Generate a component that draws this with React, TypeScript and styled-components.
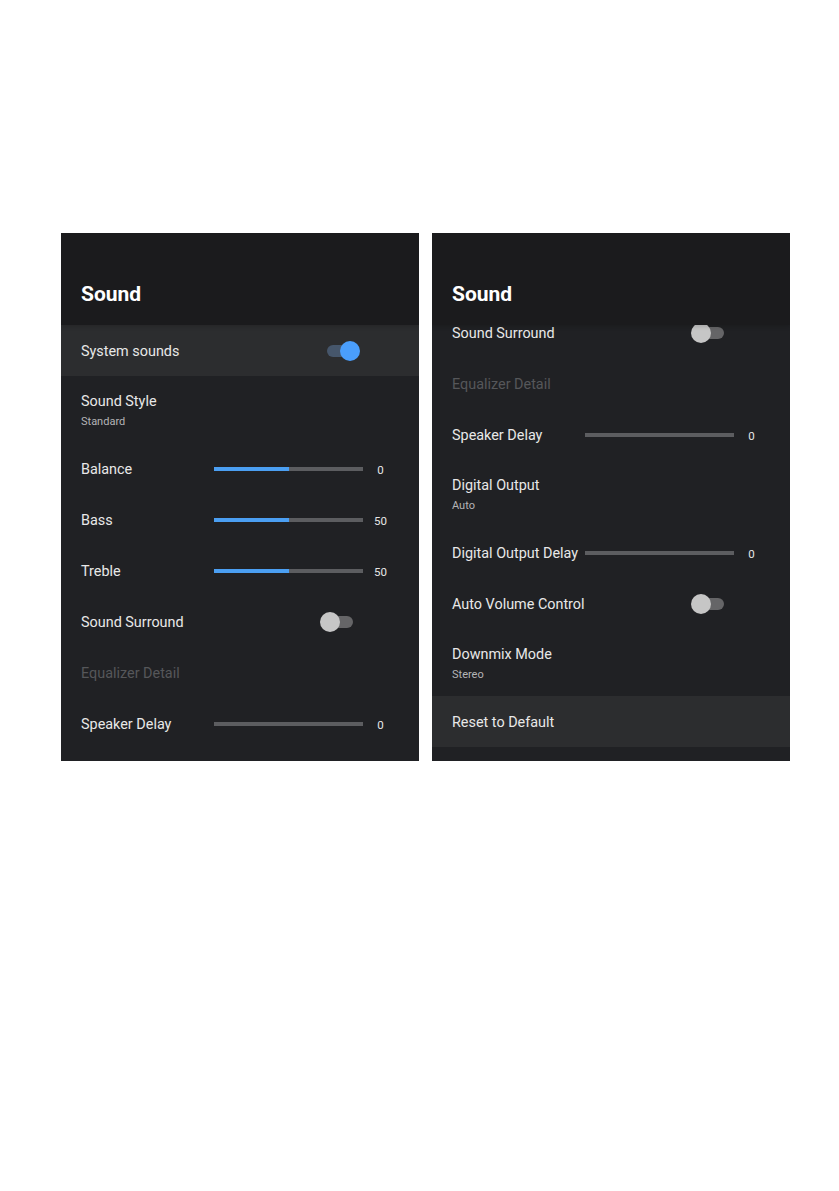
import * as React from 'react'
import styled, { createGlobalStyle } from 'styled-components'

const GlobalStyle = createGlobalStyle`
  html, body {
    margin: 0;
    padding: 0;
    background: #ffffff;
  }
  body {
    font-family: Roboto, "Noto Sans", "Liberation Sans", sans-serif;
  }
`

const Page = styled.div`
  display: flex;
  flex-direction: row;
  gap: 13px;
  padding: 233px 0 0 61px;
`

const Panel = styled.div`
  width: 358px;
  height: 528px;
  background-color: #202124;
  display: flex;
  flex-direction: column;
  overflow: hidden;
`

const Header = styled.div`
  height: 92px;
  flex: none;
  box-sizing: border-box;
  padding: 49px 0 0 20px;
  background-color: #1b1b1d;
  color: #ffffff;
  font-size: 21px;
  font-weight: 700;
  line-height: 24px;
  position: relative;
  z-index: 1;
  box-shadow: 0 2px 4px rgba(0, 0, 0, 0.15);
`

const Viewport = styled.div`
  flex: 1;
  overflow: hidden;
`

const List = styled.div<{ $offset: number }>`
  display: flex;
  flex-direction: column;
  margin-top: ${p => -p.$offset}px;
`

const Row = styled.div<{ $focused?: boolean, $tall?: boolean }>`
  display: grid;
  grid-template-columns: 133px 149px 34px;
  align-items: center;
  height: ${p => p.$tall ? 67 : 51}px;
  padding: 2px 0 0 20px;
  box-sizing: border-box;
  background-color: ${p => p.$focused ? '#2c2d2f' : 'transparent'};
`

const Label = styled.div<{ $disabled?: boolean }>`
  grid-column: 1 / 3;
  grid-row: 1;
  font-size: 14.4px;
  line-height: 18px;
  color: ${p => p.$disabled ? '#56575a' : '#e8e8e8'};
  white-space: nowrap;
`

const TextBlock = styled.div`
  grid-column: 1 / 4;
  grid-row: 1;
  display: flex;
  flex-direction: column;
  gap: 4px;
`

const Sub = styled.div`
  font-size: 11px;
  line-height: 13px;
  color: #b4b4b6;
`

const Track = styled.div`
  grid-column: 2;
  grid-row: 1;
  height: 4px;
  margin-top: -2px;
  background-color: #5c5d60;
`

const Fill = styled.div`
  height: 100%;
  background-color: #4b9ff2;
`

const Value = styled.div`
  grid-column: 3;
  grid-row: 1;
  text-align: center;
  font-size: 11.5px;
  color: #e6e6e6;
  padding-left: 1px;
`

const Toggle = styled.div`
  grid-column: 2;
  grid-row: 1;
  margin: -2px 0 0 106px;
  width: 40px;
  height: 20px;
  position: relative;
`

const ToggleTrack = styled.div<{ $on?: boolean }>`
  position: absolute;
  left: 7px;
  right: 7px;
  top: 4px;
  height: 12px;
  border-radius: 6px;
  background-color: ${p => p.$on ? '#46566b' : '#656567'};
`

const Knob = styled.div<{ $on?: boolean }>`
  position: absolute;
  top: 0;
  ${p => p.$on ? 'right: 0;' : 'left: 0;'}
  width: 20px;
  height: 20px;
  border-radius: 50%;
  background-color: ${p => p.$on ? '#4a9efc' : '#c6c6c6'};
`

type Item =
  | { kind: 'toggle', label: string, on: boolean, focused?: boolean }
  | { kind: 'text', label: string, sub?: string, disabled?: boolean, focused?: boolean }
  | { kind: 'slider', label: string, value: number, fill: number }

const leftItems: Item[] = [
  { kind: 'toggle', label: 'System sounds', on: true, focused: true },
  { kind: 'text', label: 'Sound Style', sub: 'Standard' },
  { kind: 'slider', label: 'Balance', value: 0, fill: 0.5 },
  { kind: 'slider', label: 'Bass', value: 50, fill: 0.5 },
  { kind: 'slider', label: 'Treble', value: 50, fill: 0.5 },
  { kind: 'toggle', label: 'Sound Surround', on: false },
  { kind: 'text', label: 'Equalizer Detail', disabled: true },
  { kind: 'slider', label: 'Speaker Delay', value: 0, fill: 0 },
]

const rightItems: Item[] = [
  { kind: 'toggle', label: 'Sound Surround', on: false },
  { kind: 'text', label: 'Equalizer Detail', disabled: true },
  { kind: 'slider', label: 'Speaker Delay', value: 0, fill: 0 },
  { kind: 'text', label: 'Digital Output', sub: 'Auto' },
  { kind: 'slider', label: 'Digital Output Delay', value: 0, fill: 0 },
  { kind: 'toggle', label: 'Auto Volume Control', on: false },
  { kind: 'text', label: 'Downmix Mode', sub: 'Stereo' },
  { kind: 'text', label: 'Reset to Default', focused: true },
]

function SettingRow({ item }: { item: Item }) {
  if (item.kind === 'toggle') {
    return (
      <Row $focused={ item.focused }>
        <Label>{ item.label }</Label>
        <Toggle>
          <ToggleTrack $on={ item.on } />
          <Knob $on={ item.on } />
        </Toggle>
      </Row>
    )
  }
  if (item.kind === 'slider') {
    return (
      <Row>
        <Label>{ item.label }</Label>
        <Track>
          <Fill style={{ width: `${item.fill * 100}%` }} />
        </Track>
        <Value>{ item.value }</Value>
      </Row>
    )
  }
  if (item.sub) {
    return (
      <Row $tall $focused={ item.focused }>
        <TextBlock>
          <Label $disabled={ item.disabled }>{ item.label }</Label>
          <Sub>{ item.sub }</Sub>
        </TextBlock>
      </Row>
    )
  }
  return (
    <Row $focused={ item.focused }>
      <Label $disabled={ item.disabled }>{ item.label }</Label>
    </Row>
  )
}

function SoundPanel({ items, offset }: { items: Item[], offset: number }) {
  return (
    <Panel>
      <Header>Sound</Header>
      <Viewport>
        <List $offset={ offset }>
          { items.map(x => <SettingRow key={ x.label } item={ x } />) }
        </List>
      </Viewport>
    </Panel>
  )
}

export default function App() {
  return (
    <>
      <GlobalStyle />
      <Page>
        <SoundPanel items={ leftItems } offset={ 0 } />
        <SoundPanel items={ rightItems } offset={ 18 } />
      </Page>
    </>
  )
}
